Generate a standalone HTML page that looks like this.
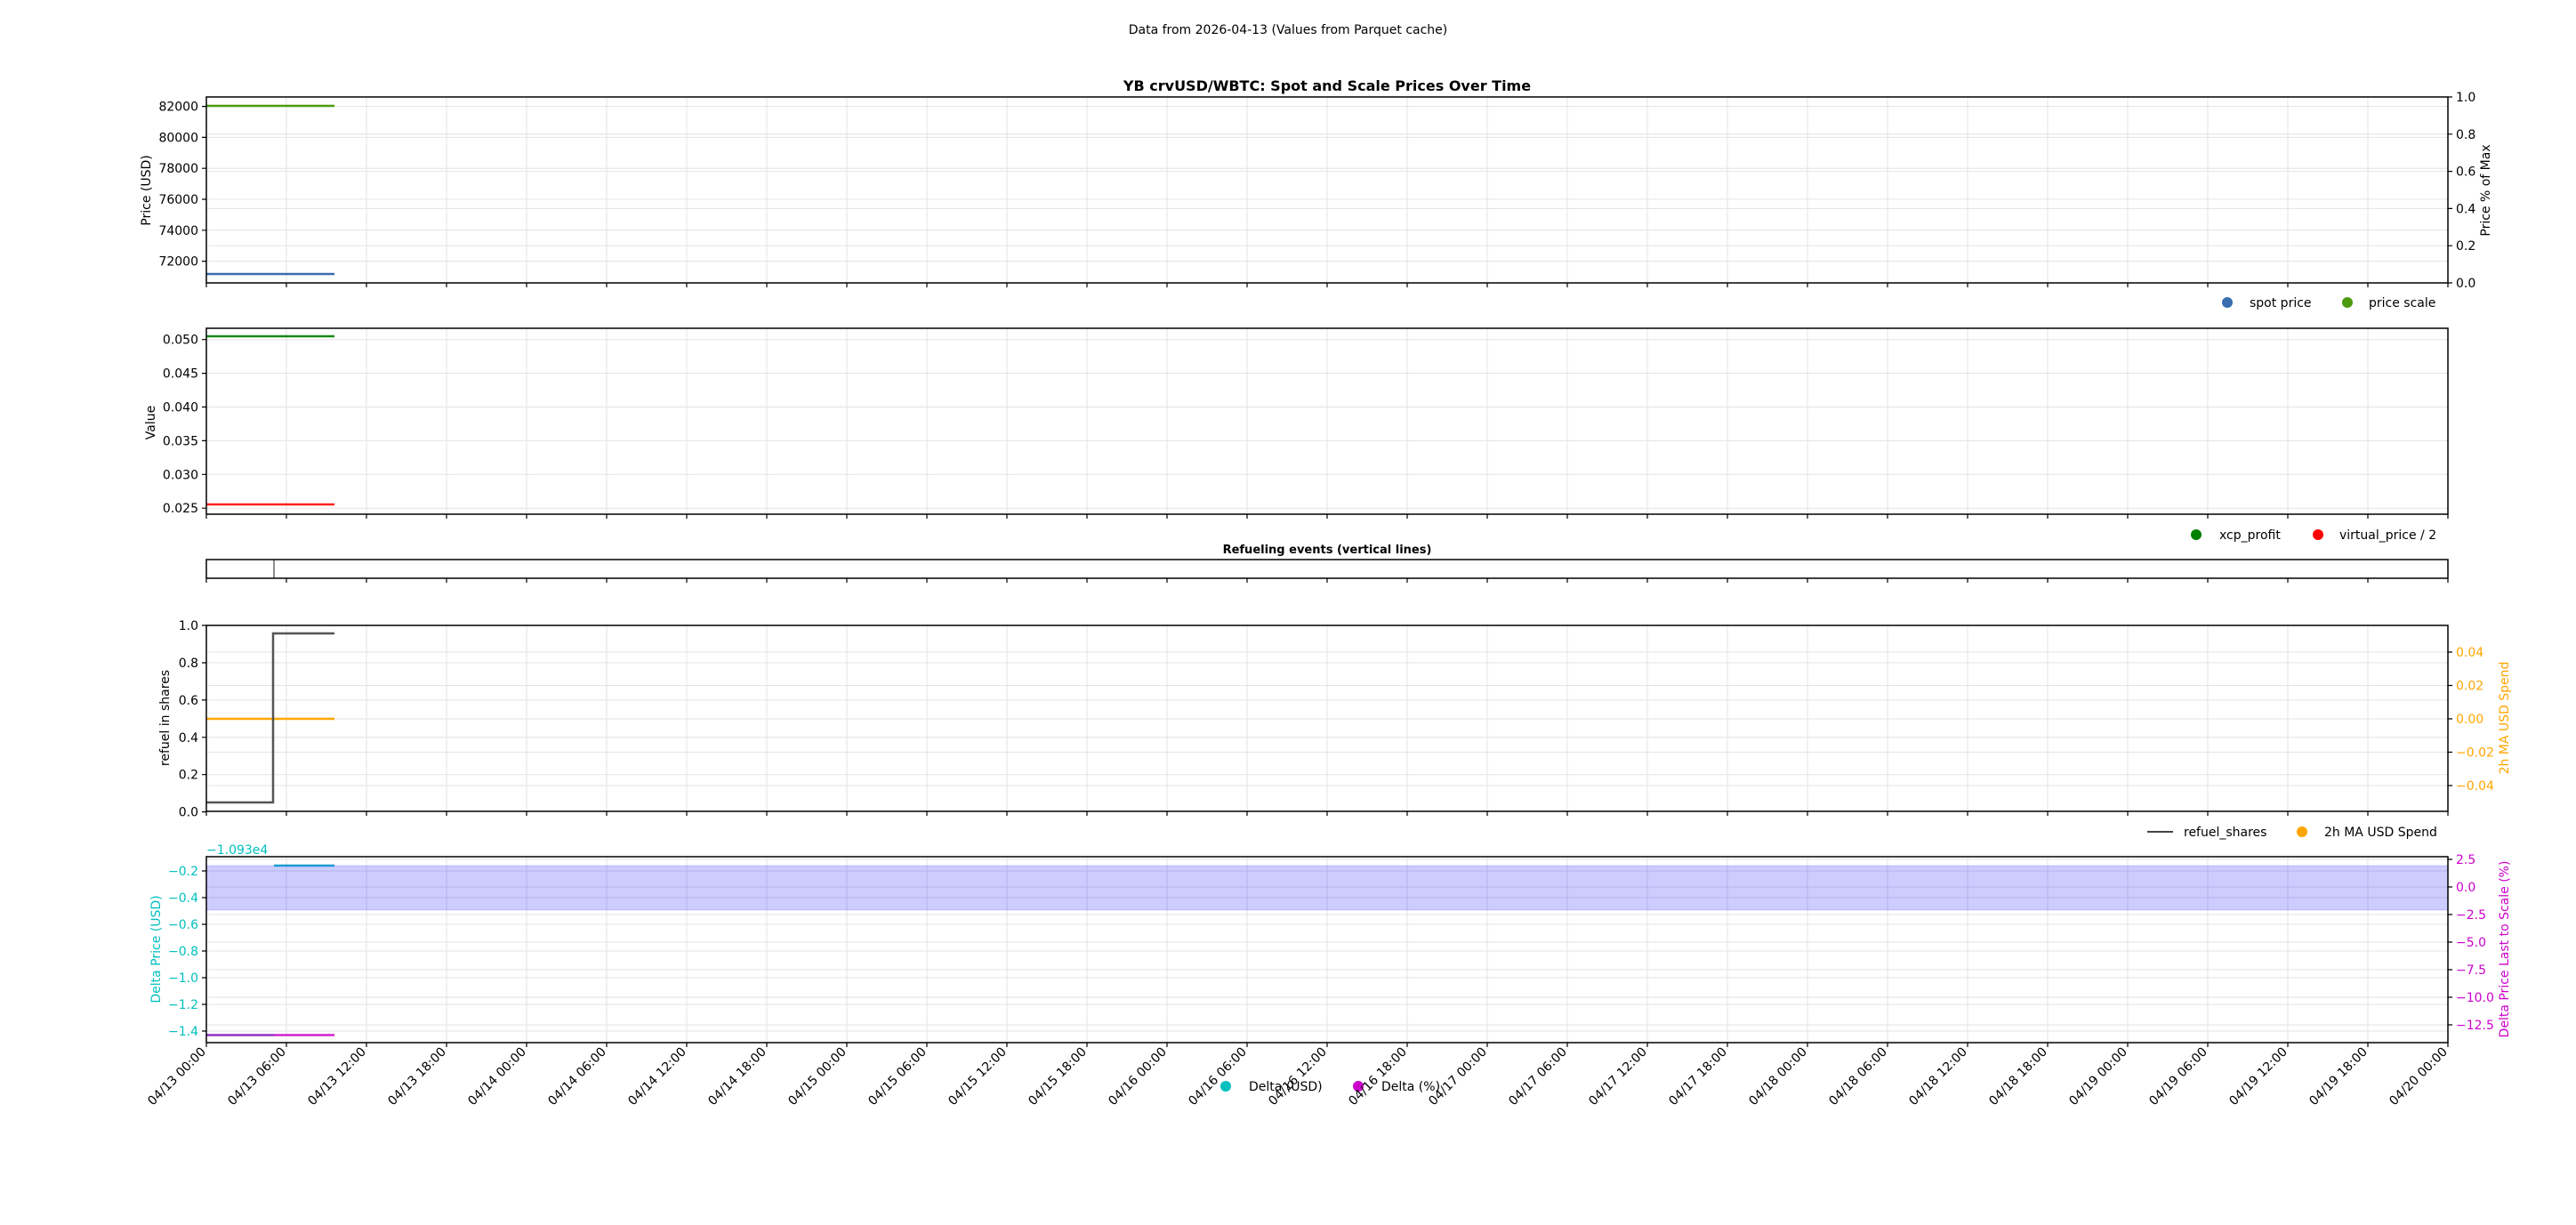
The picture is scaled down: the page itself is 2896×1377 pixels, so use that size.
<!DOCTYPE html>
<html><head><meta charset="utf-8"><style>
html,body{margin:0;padding:0;background:#fff;}
svg{display:block;font-family:"DejaVu Sans","Liberation Sans",sans-serif;}
</style></head><body>
<svg width="2896" height="1377" viewBox="0 0 2896 1377" xmlns="http://www.w3.org/2000/svg">
<rect width="2896" height="1377" fill="#fff"/>
<text x="1448" y="38" font-size="14" text-anchor="middle">Data from 2026-04-13 (Values from Parquet cache)</text>
<text x="1492" y="102" font-size="16" font-weight="bold" text-anchor="middle">YB crvUSD/WBTC: Spot and Scale Prices Over Time</text>
<text x="1492" y="622" font-size="13" font-weight="bold" text-anchor="middle">Refueling events (vertical lines)</text>

<g stroke="#e3e3e3" stroke-width="1">
<path d="M322 109V318M412 109V318M502 109V318M592 109V318M682 109V318M772 109V318M862 109V318M952 109V318M1042 109V318M1132 109V318M1222 109V318M1312 109V318M1402 109V318M1492 109V318M1582 109V318M1672 109V318M1762 109V318M1852 109V318M1942 109V318M2032 109V318M2122 109V318M2212 109V318M2302 109V318M2392 109V318M2482 109V318M2572 109V318M2662 109V318"/>
<path d="M322 369V578M412 369V578M502 369V578M592 369V578M682 369V578M772 369V578M862 369V578M952 369V578M1042 369V578M1132 369V578M1222 369V578M1312 369V578M1402 369V578M1492 369V578M1582 369V578M1672 369V578M1762 369V578M1852 369V578M1942 369V578M2032 369V578M2122 369V578M2212 369V578M2302 369V578M2392 369V578M2482 369V578M2572 369V578M2662 369V578"/>
<path d="M322 703V912M412 703V912M502 703V912M592 703V912M682 703V912M772 703V912M862 703V912M952 703V912M1042 703V912M1132 703V912M1222 703V912M1312 703V912M1402 703V912M1492 703V912M1582 703V912M1672 703V912M1762 703V912M1852 703V912M1942 703V912M2032 703V912M2122 703V912M2212 703V912M2302 703V912M2392 703V912M2482 703V912M2572 703V912M2662 703V912"/>
<path d="M322 963V1172M412 963V1172M502 963V1172M592 963V1172M682 963V1172M772 963V1172M862 963V1172M952 963V1172M1042 963V1172M1132 963V1172M1222 963V1172M1312 963V1172M1402 963V1172M1492 963V1172M1582 963V1172M1672 963V1172M1762 963V1172M1852 963V1172M1942 963V1172M2032 963V1172M2122 963V1172M2212 963V1172M2302 963V1172M2392 963V1172M2482 963V1172M2572 963V1172M2662 963V1172"/>
<path d="M232 119.6H2752M232 154.4H2752M232 189.2H2752M232 224H2752M232 258.8H2752M232 293.6H2752M232 150.8H2752M232 192.6H2752M232 234.4H2752M232 276.2H2752"/>
<path d="M232 381.7H2752M232 419.6H2752M232 457.5H2752M232 495.4H2752M232 533.3H2752M232 571.2H2752"/>
<path d="M232 870.7H2752M232 828.8H2752M232 786.9H2752M232 745H2752M232 733H2752M232 770.5H2752M232 808H2752M232 845.5H2752M232 883H2752"/>
<path d="M232 979H2752M232 1009H2752M232 1039H2752M232 1069H2752M232 1099H2752M232 1129H2752M232 1159H2752M232 966H2752M232 997H2752M232 1028H2752M232 1059H2752M232 1090H2752M232 1121H2752M232 1152H2752"/>
</g>

<rect x="232" y="973" width="2520" height="50" fill="#0000ff" fill-opacity="0.2" stroke="#0000ff" stroke-opacity="0.15"/>

<g fill="none" stroke-width="2.5">
<path d="M232 119H376" stroke="#4d9a0e"/>
<path d="M232 308H376" stroke="#3a6db0"/>
<path d="M232 378H376" stroke="#138a13"/>
<path d="M232 567H376" stroke="#ff2020"/>
<path d="M232 808H376" stroke="#ffa500"/>
<path d="M232 902H307V712H376" stroke="#555"/>
<path d="M308 973H376" stroke="#1a9ad0"/>
<path d="M232 1163.5H308" stroke="#9030c0"/>
<path d="M308 1163.5H376" stroke="#d020d0"/>
</g>
<path d="M308 629V650" stroke="#444" stroke-width="1.2"/>

<g fill="none" stroke="#000" stroke-width="1.5">
<rect x="232" y="109" width="2520" height="209"/>
<rect x="232" y="369" width="2520" height="209"/>
<rect x="232" y="629" width="2520" height="21"/>
<rect x="232" y="703" width="2520" height="209"/>
<rect x="232" y="963" width="2520" height="209"/>
</g>
<g stroke="#000" stroke-width="1.2">
<path d="M232 318v5M322 318v5M412 318v5M502 318v5M592 318v5M682 318v5M772 318v5M862 318v5M952 318v5M1042 318v5M1132 318v5M1222 318v5M1312 318v5M1402 318v5M1492 318v5M1582 318v5M1672 318v5M1762 318v5M1852 318v5M1942 318v5M2032 318v5M2122 318v5M2212 318v5M2302 318v5M2392 318v5M2482 318v5M2572 318v5M2662 318v5M2752 318v5"/>
<path d="M232 578v5M322 578v5M412 578v5M502 578v5M592 578v5M682 578v5M772 578v5M862 578v5M952 578v5M1042 578v5M1132 578v5M1222 578v5M1312 578v5M1402 578v5M1492 578v5M1582 578v5M1672 578v5M1762 578v5M1852 578v5M1942 578v5M2032 578v5M2122 578v5M2212 578v5M2302 578v5M2392 578v5M2482 578v5M2572 578v5M2662 578v5M2752 578v5"/>
<path d="M232 650v5M322 650v5M412 650v5M502 650v5M592 650v5M682 650v5M772 650v5M862 650v5M952 650v5M1042 650v5M1132 650v5M1222 650v5M1312 650v5M1402 650v5M1492 650v5M1582 650v5M1672 650v5M1762 650v5M1852 650v5M1942 650v5M2032 650v5M2122 650v5M2212 650v5M2302 650v5M2392 650v5M2482 650v5M2572 650v5M2662 650v5M2752 650v5"/>
<path d="M232 912v5M322 912v5M412 912v5M502 912v5M592 912v5M682 912v5M772 912v5M862 912v5M952 912v5M1042 912v5M1132 912v5M1222 912v5M1312 912v5M1402 912v5M1492 912v5M1582 912v5M1672 912v5M1762 912v5M1852 912v5M1942 912v5M2032 912v5M2122 912v5M2212 912v5M2302 912v5M2392 912v5M2482 912v5M2572 912v5M2662 912v5M2752 912v5"/>
<path d="M232 1172v5M322 1172v5M412 1172v5M502 1172v5M592 1172v5M682 1172v5M772 1172v5M862 1172v5M952 1172v5M1042 1172v5M1132 1172v5M1222 1172v5M1312 1172v5M1402 1172v5M1492 1172v5M1582 1172v5M1672 1172v5M1762 1172v5M1852 1172v5M1942 1172v5M2032 1172v5M2122 1172v5M2212 1172v5M2302 1172v5M2392 1172v5M2482 1172v5M2572 1172v5M2662 1172v5M2752 1172v5"/>
<path d="M227 119.6h5M227 154.4h5M227 189.2h5M227 224h5M227 258.8h5M227 293.6h5"/>
<path d="M227 381.7h5M227 419.6h5M227 457.5h5M227 495.4h5M227 533.3h5M227 571.2h5"/>
<path d="M227 703h5M227 745h5M227 786.9h5M227 828.8h5M227 870.7h5M227 912.6h5"/>
<path d="M227 979h5M227 1009h5M227 1039h5M227 1069h5M227 1099h5M227 1129h5M227 1159h5"/>
<path d="M2752 109h5M2752 150.8h5M2752 192.6h5M2752 234.4h5M2752 276.2h5M2752 318h5"/>
<path d="M2752 733h5M2752 770.5h5M2752 808h5M2752 845.5h5M2752 883h5"/>
<path d="M2752 966h5M2752 997h5M2752 1028h5M2752 1059h5M2752 1090h5M2752 1121h5M2752 1152h5"/>
</g>

<g font-size="14" text-anchor="end">
<text x="223" y="124.6">82000</text><text x="223" y="159.4">80000</text><text x="223" y="194.2">78000</text><text x="223" y="229">76000</text><text x="223" y="263.8">74000</text><text x="223" y="298.6">72000</text>
<text x="223" y="386.7">0.050</text><text x="223" y="424.6">0.045</text><text x="223" y="462.5">0.040</text><text x="223" y="500.4">0.035</text><text x="223" y="538.3">0.030</text><text x="223" y="576.2">0.025</text>
<text x="223" y="708">1.0</text><text x="223" y="750">0.8</text><text x="223" y="791.9">0.6</text><text x="223" y="833.8">0.4</text><text x="223" y="875.7">0.2</text><text x="223" y="917.6">0.0</text>
<g fill="#00bfbf"><text x="223" y="984">−0.2</text><text x="223" y="1014">−0.4</text><text x="223" y="1044">−0.6</text><text x="223" y="1074">−0.8</text><text x="223" y="1104">−1.0</text><text x="223" y="1134">−1.2</text><text x="223" y="1164">−1.4</text></g>
</g>
<text x="232" y="960" font-size="14" fill="#00bfbf">−1.093e4</text>
<g font-size="14">
<text x="2761" y="114">1.0</text><text x="2761" y="155.8">0.8</text><text x="2761" y="197.6">0.6</text><text x="2761" y="239.4">0.4</text><text x="2761" y="281.2">0.2</text><text x="2761" y="323">0.0</text>
<g fill="#ffa500"><text x="2761" y="738">0.04</text><text x="2761" y="775.5">0.02</text><text x="2761" y="813">0.00</text><text x="2761" y="850.5">−0.02</text><text x="2761" y="888">−0.04</text></g>
<g fill="#cc00cc"><text x="2761" y="971">2.5</text><text x="2761" y="1002">0.0</text><text x="2761" y="1033">−2.5</text><text x="2761" y="1064">−5.0</text><text x="2761" y="1095">−7.5</text><text x="2761" y="1126">−10.0</text><text x="2761" y="1157">−12.5</text></g>
</g>

<g font-size="14" text-anchor="middle">
<text transform="translate(169,214) rotate(-90)">Price (USD)</text>
<text transform="translate(174,475) rotate(-90)">Value</text>
<text transform="translate(190,807) rotate(-90)">refuel in shares</text>
<text transform="translate(180,1067) rotate(-90)" fill="#00bfbf">Delta Price (USD)</text>
<text transform="translate(2799,214) rotate(-90)">Price % of Max</text>
<text transform="translate(2820,807) rotate(-90)" fill="#ffa500">2h MA USD Spend</text>
<text transform="translate(2820,1067) rotate(-90)" fill="#cc00cc">Delta Price Last to Scale (%)</text>
</g>

<g font-size="14">
<circle cx="2504" cy="340" r="6" fill="#3a6db0"/><text x="2529" y="345">spot price</text>
<circle cx="2639" cy="340" r="6" fill="#4d9a0e"/><text x="2663" y="345">price scale</text>
<circle cx="2469" cy="601" r="6" fill="#008000"/><text x="2495" y="606">xcp_profit</text>
<circle cx="2606" cy="601" r="6" fill="#ff0000"/><text x="2630" y="606">virtual_price / 2</text>
<path d="M2414 935H2443" stroke="#444" stroke-width="2"/><text x="2455" y="940">refuel_shares</text>
<circle cx="2588" cy="935" r="6" fill="#ffa500"/><text x="2613" y="940">2h MA USD Spend</text>
<circle cx="1378" cy="1221" r="6" fill="#00bfbf"/><text x="1404" y="1226">Delta (USD)</text>
<circle cx="1527" cy="1221" r="6" fill="#cc00cc"/><text x="1553" y="1226">Delta (%)</text>
</g>

<g font-size="14" text-anchor="end">
<text transform="translate(232,1183) rotate(-45)">04/13 00:00</text>
<text transform="translate(322,1183) rotate(-45)">04/13 06:00</text>
<text transform="translate(412,1183) rotate(-45)">04/13 12:00</text>
<text transform="translate(502,1183) rotate(-45)">04/13 18:00</text>
<text transform="translate(592,1183) rotate(-45)">04/14 00:00</text>
<text transform="translate(682,1183) rotate(-45)">04/14 06:00</text>
<text transform="translate(772,1183) rotate(-45)">04/14 12:00</text>
<text transform="translate(862,1183) rotate(-45)">04/14 18:00</text>
<text transform="translate(952,1183) rotate(-45)">04/15 00:00</text>
<text transform="translate(1042,1183) rotate(-45)">04/15 06:00</text>
<text transform="translate(1132,1183) rotate(-45)">04/15 12:00</text>
<text transform="translate(1222,1183) rotate(-45)">04/15 18:00</text>
<text transform="translate(1312,1183) rotate(-45)">04/16 00:00</text>
<text transform="translate(1402,1183) rotate(-45)">04/16 06:00</text>
<text transform="translate(1492,1183) rotate(-45)">04/16 12:00</text>
<text transform="translate(1582,1183) rotate(-45)">04/16 18:00</text>
<text transform="translate(1672,1183) rotate(-45)">04/17 00:00</text>
<text transform="translate(1762,1183) rotate(-45)">04/17 06:00</text>
<text transform="translate(1852,1183) rotate(-45)">04/17 12:00</text>
<text transform="translate(1942,1183) rotate(-45)">04/17 18:00</text>
<text transform="translate(2032,1183) rotate(-45)">04/18 00:00</text>
<text transform="translate(2122,1183) rotate(-45)">04/18 06:00</text>
<text transform="translate(2212,1183) rotate(-45)">04/18 12:00</text>
<text transform="translate(2302,1183) rotate(-45)">04/18 18:00</text>
<text transform="translate(2392,1183) rotate(-45)">04/19 00:00</text>
<text transform="translate(2482,1183) rotate(-45)">04/19 06:00</text>
<text transform="translate(2572,1183) rotate(-45)">04/19 12:00</text>
<text transform="translate(2662,1183) rotate(-45)">04/19 18:00</text>
<text transform="translate(2752,1183) rotate(-45)">04/20 00:00</text>
</g>
</svg>
</body></html>
